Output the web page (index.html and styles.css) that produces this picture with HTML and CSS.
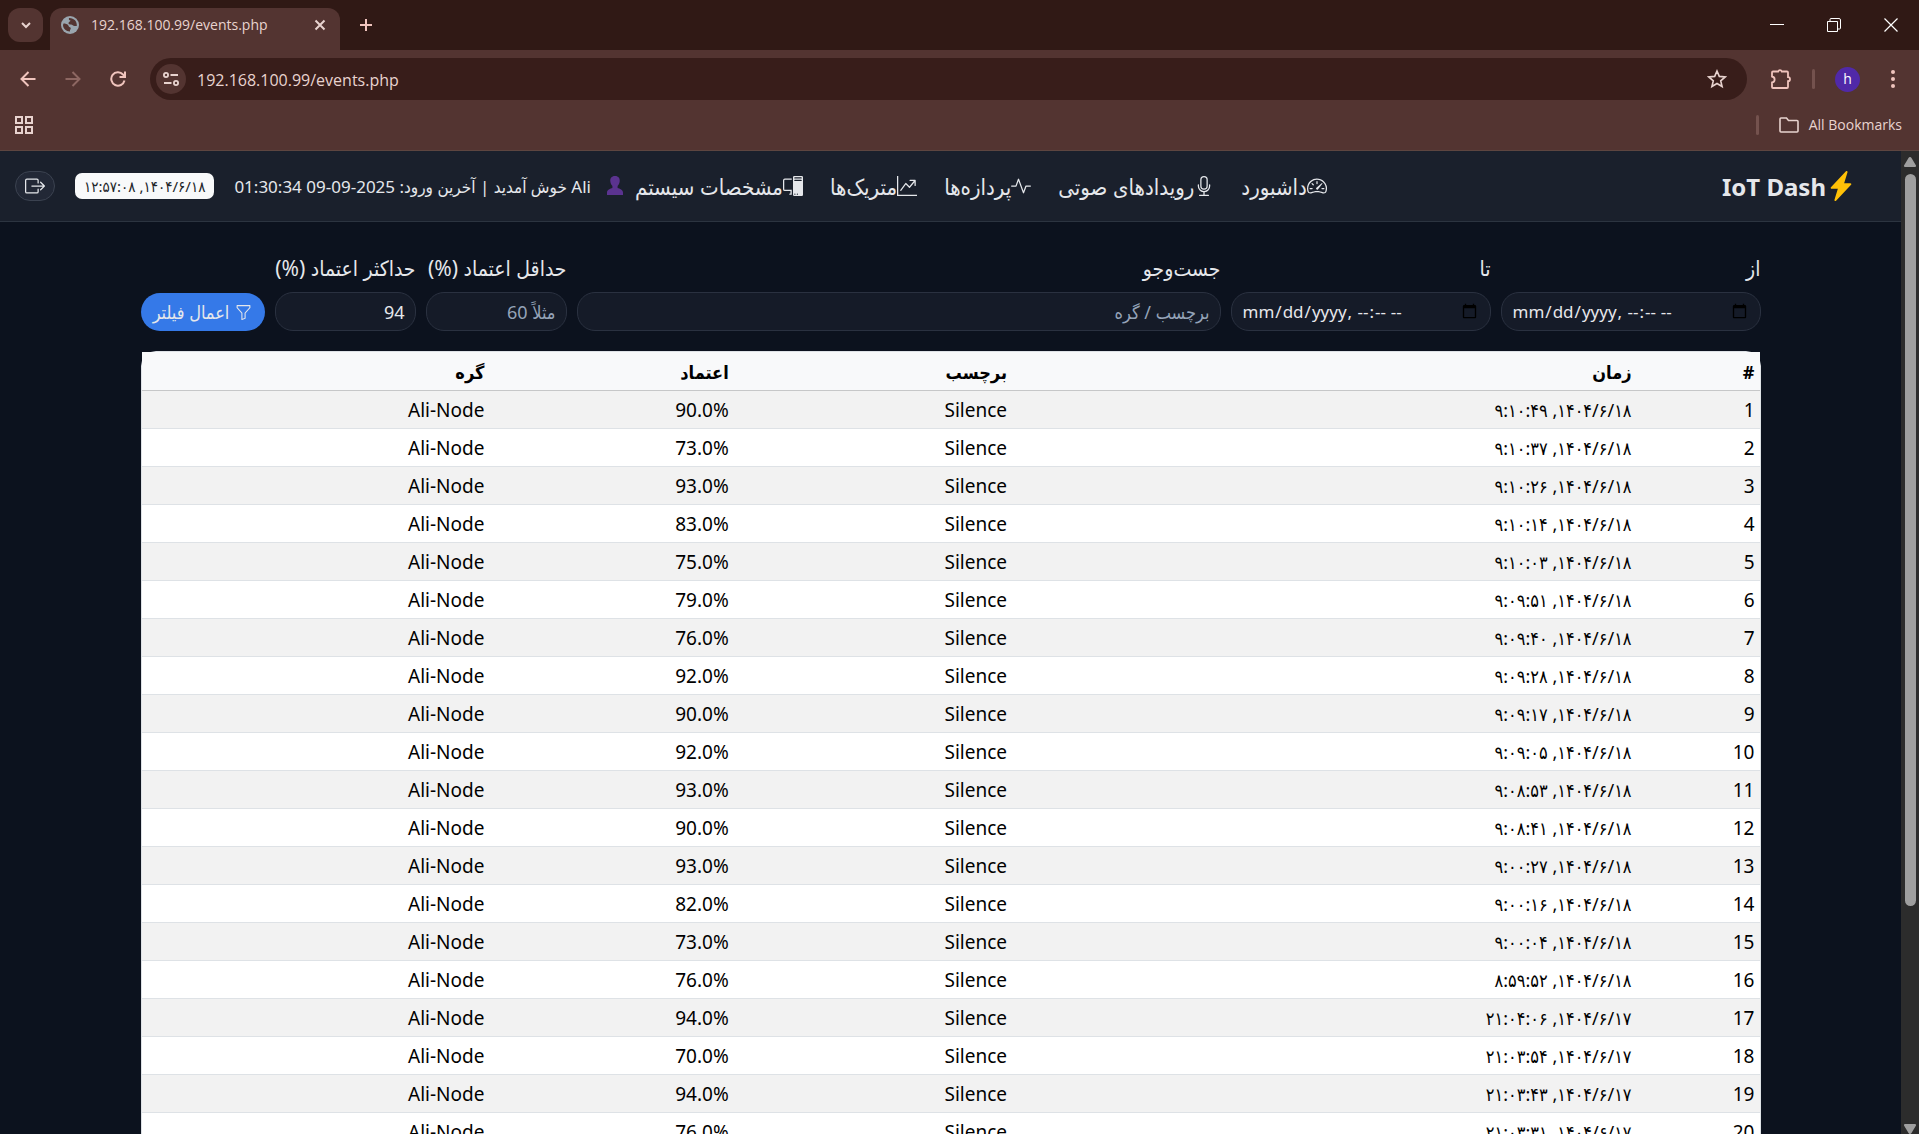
FILE: index.html
```html
<!DOCTYPE html>
<html lang="fa">
<head>
<meta charset="utf-8">
<meta name="viewport" content="width=device-width, initial-scale=1">
<title>IoT Dash</title>
<link rel="stylesheet" href="styles.css">
</head>
<body>
<div class="browser">
  <header class="chrome" lang="en">
    <div class="tabstrip">
      <button class="tab-search" aria-label="Search tabs"><svg width="12" height="12" viewBox="0 0 12 12"><path d="M2 4l4 4 4-4" fill="none" stroke="currentColor" stroke-width="2"/></svg></button>
      <div class="tab">
        <svg class="favicon" width="18" height="18" viewBox="0 0 18 18"><circle cx="9" cy="9" r="9" fill="#9aa5ae"/><path d="M2.5 7.500c2 0 3.500.5 4.500 1.500s.5 2 2 2.200c1 .2 1 1.800 0 2.800v1.500C5 15.500 2 12.500 2 9zM8 2c-.5 1.500.2 2.500 1.500 2.600-.2 1.200-2 1.200-2 2.600 0 1 1.200 1.300 2.500 1.300 1.500 0 2 1.500 3.500 1.500h2.300C16.300 5.500 13 1.800 8 2z" fill="#533431"/></svg>
        <span class="tab-title">192.168.100.99/events.php</span>
        <button class="plain" aria-label="Close tab"><svg width="12" height="12" viewBox="0 0 12 12"><path d="M1.500 1.500l9 9m0-9l-9 9" fill="none" stroke="currentColor" stroke-width="2"/></svg></button>
      </div>
      <button class="plain new-tab" aria-label="New tab"><svg width="14" height="14" viewBox="0 0 14 14"><path d="M7 1v12M1 7h12" fill="none" stroke="currentColor" stroke-width="2"/></svg></button>
      <div class="window-buttons">
        <button class="plain" aria-label="Minimize"><svg width="14" height="14" viewBox="0 0 14 14"><path d="M0 6.500h14" stroke="currentColor"/></svg></button>
        <button class="plain" aria-label="Restore"><svg width="14" height="14" viewBox="0 0 14 14"><path d="M.5 3.500h10v10H.5zM3 3V1.500Q3 .5 4 .5h8q1.500 0 1.500 1.500v8q0 1-1 1H11" fill="none" stroke="currentColor"/></svg></button>
        <button class="plain" aria-label="Close"><svg width="14" height="14" viewBox="0 0 14 14"><path d="M.5.5l13 13m0-13l-13 13" stroke="currentColor" stroke-width="1.200"/></svg></button>
      </div>
    </div>
    <div class="toolbar">
      <button class="plain" aria-label="Back"><svg width="16" height="16" viewBox="0 0 16 16"><path d="M15.500 8H2M8.500 1L1.500 8l7 7" fill="none" stroke="currentColor" stroke-width="2"/></svg></button>
      <button class="plain forward" aria-label="Forward" disabled><svg width="16" height="16" viewBox="0 0 16 16"><path d="M.5 8H14M7.500 1l7 7-7 7" fill="none" stroke="currentColor" stroke-width="2"/></svg></button>
      <button class="plain" aria-label="Reload"><svg width="16" height="16" viewBox="0 0 16 16"><path d="M14.500 9.500A6.700 6.700 0 1 1 13 3.500l2 2M15 .5V6H9.500" fill="none" stroke="currentColor" stroke-width="2"/></svg></button>
      <div class="omnibox">
        <button class="site-info" aria-label="Site information"><svg width="16" height="14" viewBox="0 0 16 14"><g fill="none" stroke="currentColor" stroke-width="1.800"><circle cx="3" cy="3" r="2.100"/><circle cx="13" cy="11" r="2.100"/><path d="M7.500 3H15M1 11h7.500"/></g></svg></button>
        <input class="url" aria-label="Address" value="192.168.100.99/events.php">
        <button class="plain star" aria-label="Bookmark"><svg width="20" height="20" viewBox="0 0 20 20"><path d="M10 2l2.300 5.400 5.900.5-4.500 3.900 1.400 5.700L10 14.500l-5.100 3 1.400-5.700L1.800 7.900l5.900-.5z" fill="none" stroke="currentColor" stroke-width="1.600"/></svg></button>
      </div>
      <button class="plain ext" aria-label="Extensions"><svg width="22" height="22" viewBox="0 0 22 22"><path d="M3 3.500h5.200a1.900 1.900 0 0 1 3.600 0H17q1 0 1 1v4.700a2 2 0 0 1 0 4V19q0 1-1 1H3q-1 0-1-1v-4.500c3.500-.5 3.500-5.500 0-6V4.500q0-1 1-1z" fill="none" stroke="currentColor" stroke-width="1.800"/></svg></button>
      <span class="divider"></span>
      <button class="avatar" aria-label="Profile">h</button>
      <button class="plain menu" aria-label="Menu"><svg width="4" height="18" viewBox="0 0 4 18"><g fill="currentColor"><circle cx="2" cy="2" r="2"/><circle cx="2" cy="9" r="2"/><circle cx="2" cy="16" r="2"/></g></svg></button>
    </div>
    <div class="bookmarks">
      <button class="plain" aria-label="Apps"><svg width="18" height="18" viewBox="0 0 18 18"><path d="M1 1h6v6H1zM11 1h6v6h-6zM1 11h6v6H1zM11 11h6v6h-6z" fill="none" stroke="currentColor" stroke-width="2"/></svg></button>
      <span class="divider end"></span>
      <button class="plain all"><svg width="20" height="16" viewBox="0 0 20 16"><path d="M2 1h5.500l2 2.500H18q1 0 1 1V14q0 1-1 1H2q-1 0-1-1V2q0-1 1-1z" fill="none" stroke="currentColor" stroke-width="1.600"/></svg><span>All Bookmarks</span></button>
    </div>
  </header>

  <div class="viewport">
    <div class="page" dir="rtl">
      <nav class="navbar">
        <a class="brand" href="#"><svg class="bolt" width="30" height="30" viewBox="0 0 16 16"><path d="M11.251.068a.5.500 0 0 1 .227.580L9.677 6.500H13a.5.500 0 0 1 .364.843l-8 8.500a.5.500 0 0 1-.842-.490L6.323 9.500H3a.5.500 0 0 1-.364-.843l8-8.500a.5.500 0 0 1 .615-.090z"/></svg><span>IoT Dash</span></a>
        <ul class="links">
          <li><a href="#"><svg class="bi" viewBox="0 0 16 16"><path d="M8 4a.5.500 0 0 1 .5.500V6a.5.500 0 0 1-1 0V4.500A.5.500 0 0 1 8 4M3.732 5.732a.5.500 0 0 1 .707 0l.915.914a.5.500 0 1 1-.708.708l-.914-.915a.5.500 0 0 1 0-.707M2 10a.5.500 0 0 1 .5-.5h1.586a.5.500 0 0 1 0 1H2.500A.5.500 0 0 1 2 10m9.500 0a.5.500 0 0 1 .5-.5h1.500a.5.500 0 0 1 0 1H12a.5.500 0 0 1-.5-.5m.754-4.246a.39.390 0 0 0-.527-.020L7.547 9.310a.91.910 0 1 0 1.302 1.258l3.434-4.297a.39.390 0 0 0-.029-.518z"/><path fill-rule="evenodd" d="M0 10a8 8 0 1 1 15.547 2.661c-.442 1.253-1.845 1.602-2.932 1.250C11.309 13.488 9.475 13 8 13c-1.474 0-3.310.488-4.615.911-1.087.352-2.490.003-2.932-1.250A8 8 0 0 1 0 10m8-7a7 7 0 0 0-6.603 9.329c.203.575.923.876 1.680.630C4.397 12.533 6.358 12 8 12s3.604.532 4.923.960c.757.245 1.477-.056 1.680-.631A7 7 0 0 0 8 3"/></svg>داشبورد</a></li>
          <li><a href="#"><svg class="bi" viewBox="0 0 16 16"><path d="M3.500 6.500A.5.500 0 0 1 4 7v1a4 4 0 0 0 8 0V7a.5.500 0 0 1 1 0v1a5 5 0 0 1-4.500 4.975V15h3a.5.500 0 0 1 0 1h-7a.5.500 0 0 1 0-1h3v-2.025A5 5 0 0 1 3 8V7a.5.500 0 0 1 .5-.5"/><path d="M10 8a2 2 0 1 1-4 0V3a2 2 0 1 1 4 0zM8 0a3 3 0 0 0-3 3v5a3 3 0 0 0 6 0V3a3 3 0 0 0-3-3"/></svg>رویدادهای صوتی</a></li>
          <li><a href="#"><svg class="bi" viewBox="0 0 16 16"><path d="M6 2a.5.500 0 0 1 .47.330L10 12.036l1.530-4.208A.5.500 0 0 1 12 7.500h3.500a.5.500 0 0 1 0 1h-3.150l-1.880 5.170a.5.500 0 0 1-.94 0L6 3.964 4.470 8.171A.5.500 0 0 1 4 8.500H.5a.5.500 0 0 1 0-1h3.150l1.880-5.170A.5.500 0 0 1 6 2"/></svg>پردازه‌ها</a></li>
          <li><a href="#"><svg class="bi" viewBox="0 0 16 16"><path fill-rule="evenodd" d="M0 0h1v15h15v1H0zm10 3.500a.5.500 0 0 1 .5-.5h4a.5.500 0 0 1 .5.500v4a.5.500 0 0 1-1 0V4.900l-3.613 4.417a.5.500 0 0 1-.74.037L7.060 6.767l-3.656 5.027a.5.500 0 0 1-.808-.588l4-5.500a.5.500 0 0 1 .758-.060l2.609 2.610L13.445 4H10.500a.5.500 0 0 1-.5-.5"/></svg>متریک‌ها</a></li>
          <li><a href="#"><svg class="bi" viewBox="0 0 16 16"><path d="M8 1a1 1 0 0 1 1-1h6a1 1 0 0 1 1 1v14a1 1 0 0 1-1 1H9a1 1 0 0 1-1-1zm1 13.500a.5.500 0 1 0 1 0 .5.500 0 0 0-1 0m2 0a.5.500 0 1 0 1 0 .5.500 0 0 0-1 0M9.500 1a.5.500 0 0 0 0 1h5a.5.500 0 0 0 0-1zM9 3.500a.5.500 0 0 0 .5.500h5a.5.500 0 0 0 0-1h-5a.5.500 0 0 0-.5.500M1.500 2A1.500 1.500 0 0 0 0 3.500v7A1.500 1.500 0 0 0 1.500 12H6v2h-.5a.5.500 0 0 0 0 1H7v-4H1.500a.5.500 0 0 1-.5-.5v-7a.5.500 0 0 1 .5-.5H7V2z"/></svg>مشخصات سیستم</a></li>
        </ul>
        <span class="user"><svg width="16" height="20" viewBox="0 0 16 20"><path d="M8 0c3.500 0 5 2.300 4.700 5.300-.2 2.200-1 3.700-2.100 4.700v2c2 .7 5.400 1.500 5.400 4.500V19H0v-2.500C0 13.500 3.400 12.700 5.400 12v-2C4.300 9 3.500 7.500 3.300 5.300 3 2.300 4.500 0 8 0z" fill="#5b3390"/></svg><span>Ali خوش آمدید | آخرین ورود: 2025-09-09 01:30:34</span></span>
        <span class="clock">۱۴۰۴/۶/۱۸, ۱۲:۵۷:۰۸</span>
        <button class="logout" aria-label="خروج"><svg class="bi" viewBox="0 0 16 16"><path fill-rule="evenodd" d="M10 12.500a.5.500 0 0 1-.5.500h-8a.5.500 0 0 1-.5-.5v-9a.5.500 0 0 1 .5-.5h8a.5.500 0 0 1 .5.500v2a.5.500 0 0 0 1 0v-2A1.500 1.500 0 0 0 9.500 2h-8A1.500 1.500 0 0 0 0 3.500v9A1.500 1.500 0 0 0 1.500 14h8a1.500 1.500 0 0 0 1.500-1.500v-2a.5.500 0 0 0-1 0z"/><path fill-rule="evenodd" d="M15.854 8.354a.5.500 0 0 0 0-.708l-3-3a.5.500 0 0 0-.708.708L14.293 7.500H5.500a.5.500 0 0 0 0 1h8.793l-2.147 2.146a.5.500 0 0 0 .708.708z"/></svg></button>
      </nav>

      <main class="container">
        <form class="filters">
          <div class="field"><label for="from">از</label><input id="from" type="datetime-local" dir="ltr" lang="en"></div>
          <div class="field"><label for="to">تا</label><input id="to" type="datetime-local" dir="ltr" lang="en"></div>
          <div class="field"><label for="q">جست‌وجو</label><input id="q" type="text" placeholder="برچسب / گره"></div>
          <div class="field"><label for="min">حداقل اعتماد (%)</label><input id="min" type="text" placeholder="مثلاً 60"></div>
          <div class="field"><label for="max">حداکثر اعتماد (%)</label><input id="max" type="text" value="94"></div>
          <button class="apply" type="button"><svg class="funnel" viewBox="0 0 16 16"><path d="M1.500 1.500A.5.500 0 0 1 2 1h12a.5.500 0 0 1 .5.500v2a.5.500 0 0 1-.128.334L10 8.692V13.500a.5.500 0 0 1-.342.474l-3 1A.5.500 0 0 1 6 14.500V8.692L1.628 3.834A.5.500 0 0 1 1.500 3.500zm1 .5v1.308l4.372 4.858A.5.500 0 0 1 7 8.500v5.306l2-.666V8.500a.5.500 0 0 1 .128-.334L13.500 3.308V2z"/></svg>اعمال فیلتر</button>
        </form>

        <div class="card">
          <table class="events">
            <colgroup><col class="c-num"><col class="c-time"><col class="c-label"><col class="c-conf"><col class="c-node"></colgroup>
            <thead><tr><th>#</th><th>زمان</th><th>برچسب</th><th>اعتماد</th><th>گره</th></tr></thead>
            <tbody>
              <tr><td>1</td><td class="time">۱۴۰۴/۶/۱۸, ۹:۱۰:۴۹</td><td>Silence</td><td dir="ltr">90.0%</td><td>Ali-Node</td></tr>
              <tr><td>2</td><td class="time">۱۴۰۴/۶/۱۸, ۹:۱۰:۳۷</td><td>Silence</td><td dir="ltr">73.0%</td><td>Ali-Node</td></tr>
              <tr><td>3</td><td class="time">۱۴۰۴/۶/۱۸, ۹:۱۰:۲۶</td><td>Silence</td><td dir="ltr">93.0%</td><td>Ali-Node</td></tr>
              <tr><td>4</td><td class="time">۱۴۰۴/۶/۱۸, ۹:۱۰:۱۴</td><td>Silence</td><td dir="ltr">83.0%</td><td>Ali-Node</td></tr>
              <tr><td>5</td><td class="time">۱۴۰۴/۶/۱۸, ۹:۱۰:۰۳</td><td>Silence</td><td dir="ltr">75.0%</td><td>Ali-Node</td></tr>
              <tr><td>6</td><td class="time">۱۴۰۴/۶/۱۸, ۹:۰۹:۵۱</td><td>Silence</td><td dir="ltr">79.0%</td><td>Ali-Node</td></tr>
              <tr><td>7</td><td class="time">۱۴۰۴/۶/۱۸, ۹:۰۹:۴۰</td><td>Silence</td><td dir="ltr">76.0%</td><td>Ali-Node</td></tr>
              <tr><td>8</td><td class="time">۱۴۰۴/۶/۱۸, ۹:۰۹:۲۸</td><td>Silence</td><td dir="ltr">92.0%</td><td>Ali-Node</td></tr>
              <tr><td>9</td><td class="time">۱۴۰۴/۶/۱۸, ۹:۰۹:۱۷</td><td>Silence</td><td dir="ltr">90.0%</td><td>Ali-Node</td></tr>
              <tr><td>10</td><td class="time">۱۴۰۴/۶/۱۸, ۹:۰۹:۰۵</td><td>Silence</td><td dir="ltr">92.0%</td><td>Ali-Node</td></tr>
              <tr><td>11</td><td class="time">۱۴۰۴/۶/۱۸, ۹:۰۸:۵۳</td><td>Silence</td><td dir="ltr">93.0%</td><td>Ali-Node</td></tr>
              <tr><td>12</td><td class="time">۱۴۰۴/۶/۱۸, ۹:۰۸:۴۱</td><td>Silence</td><td dir="ltr">90.0%</td><td>Ali-Node</td></tr>
              <tr><td>13</td><td class="time">۱۴۰۴/۶/۱۸, ۹:۰۰:۲۷</td><td>Silence</td><td dir="ltr">93.0%</td><td>Ali-Node</td></tr>
              <tr><td>14</td><td class="time">۱۴۰۴/۶/۱۸, ۹:۰۰:۱۶</td><td>Silence</td><td dir="ltr">82.0%</td><td>Ali-Node</td></tr>
              <tr><td>15</td><td class="time">۱۴۰۴/۶/۱۸, ۹:۰۰:۰۴</td><td>Silence</td><td dir="ltr">73.0%</td><td>Ali-Node</td></tr>
              <tr><td>16</td><td class="time">۱۴۰۴/۶/۱۸, ۸:۵۹:۵۲</td><td>Silence</td><td dir="ltr">76.0%</td><td>Ali-Node</td></tr>
              <tr><td>17</td><td class="time">۱۴۰۴/۶/۱۷, ۲۱:۰۴:۰۶</td><td>Silence</td><td dir="ltr">94.0%</td><td>Ali-Node</td></tr>
              <tr><td>18</td><td class="time">۱۴۰۴/۶/۱۷, ۲۱:۰۳:۵۴</td><td>Silence</td><td dir="ltr">70.0%</td><td>Ali-Node</td></tr>
              <tr><td>19</td><td class="time">۱۴۰۴/۶/۱۷, ۲۱:۰۳:۴۳</td><td>Silence</td><td dir="ltr">94.0%</td><td>Ali-Node</td></tr>
              <tr><td>20</td><td class="time">۱۴۰۴/۶/۱۷, ۲۱:۰۳:۳۱</td><td>Silence</td><td dir="ltr">76.0%</td><td>Ali-Node</td></tr>
            </tbody>
          </table>
        </div>
      </main>
    </div>
    <div class="scrollbar" aria-hidden="true">
      <svg width="12" height="10" viewBox="0 0 12 10"><path d="M6 0q1 0 1.500 1L12 8.500q.2 1.500-1 1.500H1Q-.2 10 0 8.500L4.500 1Q5 0 6 0z" fill="#9f9f9f"/></svg>
      <div class="track"><div class="thumb"></div></div>
      <svg width="12" height="10" viewBox="0 0 12 10"><path d="M6 10q1 0 1.500-1L12 1.500Q12.200 0 11 0H1Q-.2 0 0 1.500L4.500 9Q5 10 6 10z" fill="#9f9f9f"/></svg>
    </div>
  </div>
</div>
</body>
</html>
```
FILE: styles.css
```css
* { box-sizing: border-box; }
html, body { height: 100%; margin: 0; }
body {
  overflow: hidden;
  background: #0c121e;
  font-family: "Noto Sans", "DejaVu Sans Condensed", "DejaVu Sans", sans-serif;
  font-size: 19px;
}
button, input { font: inherit; color: inherit; }
svg { display: block; flex: none; }
.browser { display: flex; flex-direction: column; height: 100vh; }

/* Browser frame */
.chrome {
  flex: none;
  color: #e8d3cf;
  background: #533431;
  border-bottom: 1px solid #5d4540;
  font-family: "Open Sans", sans-serif;
}
.plain {
  display: flex;
  align-items: center;
  padding: 0;
  border: 0;
  background: none;
  color: inherit;
}
.tabstrip {
  display: flex;
  height: 50px;
  padding: 8px 0 0 8px;
  background: #301915;
}
.tab-search {
  display: grid;
  place-items: center;
  width: 35px;
  height: 34px;
  margin-right: 7px;
  padding: 0;
  border: 0;
  border-radius: 12px;
  background: #533431;
}
.tab {
  display: flex;
  align-items: center;
  gap: 12px;
  width: 290px;
  padding: 0 14px 8px 11px;
  border-radius: 12px 12px 0 0;
  background: #533431;
}
.tab-title { flex: 1; font-size: 14px; line-height: 20px; }
.new-tab { margin: 0 0 8px 19px; color: #f0c4bd; }
.window-buttons {
  display: flex;
  gap: 43px;
  margin: 0 21px 8px auto;
  color: #fff;
}
.toolbar {
  display: flex;
  align-items: center;
  height: 58px;
  padding: 0 24px 0 20px;
  gap: 29px;
  color: #f0c4bd;
}
.forward { color: #8d6762; }
.omnibox {
  display: flex;
  align-items: center;
  flex: 1;
  height: 42px;
  margin-left: -5px;
  padding: 0 20px 0 6px;
  border-radius: 21px;
  background: #381d1a;
  color: #e8d3cf;
}
.site-info {
  display: grid;
  place-items: center;
  width: 30px;
  height: 30px;
  padding: 0;
  border: 0;
  border-radius: 50%;
  background: #533431;
}
.url {
  flex: 1;
  margin-left: 11px;
  padding: 2px 0 0;
  border: 0;
  outline: 0;
  background: none;
  font-size: 16px;
  line-height: 24px;
}
.ext { margin-left: -6px; }
.divider { width: 3px; height: 20px; border-radius: 2px; background: #74524e; margin-left: -9px; }
.avatar {
  width: 25px;
  height: 25px;
  margin-left: -9px;
  padding: 0;
  border: 0;
  border-radius: 50%;
  background: #5029a8;
  color: #fff;
  font-size: 14px;
  line-height: 24px;
}
.menu { margin-left: 2px; }
.bookmarks {
  display: flex;
  align-items: center;
  height: 42px;
  padding: 0 17px 8px 15px;
}
.divider.end { margin-left: auto; }
.all { gap: 10px; margin-left: 20px; font-size: 14px; line-height: 20px; }

/* Page viewport and its scrollbar */
.viewport { display: flex; flex: 1; min-height: 0; }
.page { flex: 1; min-width: 0; overflow: hidden; }
.scrollbar {
  display: flex;
  flex-direction: column;
  align-items: center;
  width: 18px;
  padding: 6px 0 0;
  background: #2c2c2c;
}
.track { flex: 1; padding-top: 7px; }
.thumb { width: 11px; height: 77%; border-radius: 6px; background: #9f9f9f; }

/* Navbar */
.navbar {
  display: flex;
  align-items: center;
  height: 71px;
  padding: 0 45px 0 15px;
  border-bottom: 1px solid #2c3440;
  background: #1a202c;
  color: #e5e7eb;
}
.navbar a { color: inherit; text-decoration: none; }
.brand { display: flex; align-items: center; font-size: 24px; font-weight: 700; }
.bolt { fill: #ffc107; }
.links {
  display: flex;
  gap: 27px;
  margin: 0 auto 0 12px;
  padding: 0;
  list-style: none;
  font-size: 22px;
}
.links a { display: flex; align-items: center; white-space: nowrap; }
.bi { width: 20px; height: 20px; fill: currentColor; }
.user {
  display: flex;
  align-items: center;
  gap: 16px;
  white-space: nowrap;
  font-size: 17px;
}
.clock {
  margin: 0 20px;
  padding: 0 9px;
  border-radius: 7px;
  background: #f8f9fa;
  color: #212529;
  font-size: 15px;
  line-height: 26px;
  white-space: nowrap;
}
.logout {
  display: grid;
  place-items: center;
  width: 40px;
  height: 30px;
  padding: 0;
  border: 1px solid #3b4250;
  border-radius: 15px;
  background: #222836;
}

/* Filters */
.container { width: 1620px; max-width: 86%; margin: 0 auto; padding-top: 30px; }
.filters {
  display: grid;
  grid-template-columns: 260px 260px 1fr 141px 141px 124px;
  align-items: end;
  gap: 10px;
  color: #e5e7eb;
}
.field { display: flex; flex-direction: column; gap: 8px; min-width: 0; }
.field label { font-size: 21px; line-height: 32px; white-space: nowrap; }
.field input {
  width: 100%;
  height: 39px;
  padding: 0 10px;
  border: 1px solid #2a3140;
  border-radius: 18px;
  outline: 0;
  background: #151b28;
  font-size: 18px;
}
.field input[type="datetime-local"] { font-size: 17px; }
.field input::placeholder { color: #94a3b8; opacity: 1; }
.apply {
  display: flex;
  align-items: center;
  justify-content: center;
  gap: 6px;
  height: 38px;
  padding: 0;
  border: 0;
  border-radius: 19px;
  background: #3579e8;
  white-space: nowrap;
  font-size: 18px;
}
.funnel { width: 17px; height: 17px; fill: currentColor; }

/* Events table */
.card { margin-top: 20px; border: 1px solid #dee2e6; border-radius: 15px; }
.events {
  width: 100%;
  table-layout: fixed;
  border-collapse: collapse;
  background: #fff;
  color: #000;
}
.c-num { width: 7.6%; }
.c-time { width: 38.6%; }
.c-label { width: 17.2%; }
.c-conf { width: 15.1%; }
.events th, .events td {
  height: 38px;
  padding: 2px 5px 0;
  border-bottom: 1px solid #dee2e6;
  text-align: right;
  line-height: 28px;
  white-space: nowrap;
}
.events th { background: #f8f9fa; border-bottom-color: #c6c7c8; font-size: 18px; font-weight: 700; }
.events .time { font-size: 18px; }
.events tbody tr:nth-child(odd) { background: #f2f2f2; }
```
